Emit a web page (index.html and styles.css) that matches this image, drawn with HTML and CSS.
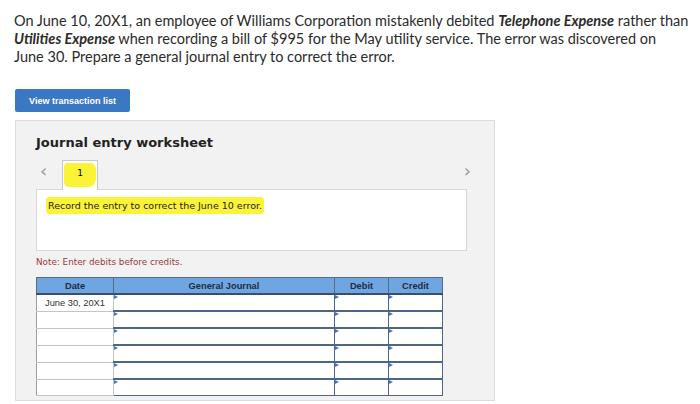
FILE: index.html
```html
<!DOCTYPE html>
<html lang="en">
<head>
    <meta charset="UTF-8">
    <title>Journal entry worksheet</title>
    <link rel="stylesheet" href="styles.css">
</head>
<body>
    <div class="page">
        <p class="question">
            On June 10, 20X1, an employee of Williams Corporation mistakenly debited <b><i>Telephone Expense</i></b> rather than<br>
            <b><i>Utilities Expense</i></b> when recording a bill of $995 for the May utility service. The error was discovered on<br>
            June 30. Prepare a general journal entry to correct the error.
        </p>

        <button class="btn-list">View transaction list</button>

        <!-- worksheet panel -->
        <div class="worksheet">
            <h2>Journal entry worksheet</h2>

            <div class="tabs">
                <span class="arrow">&lsaquo;</span>
                <span class="tab"><span class="mark">1</span></span>
                <span class="spacer"></span>
                <span class="arrow">&rsaquo;</span>
            </div>

            <div class="task">
                <span class="mark">Record the entry to correct the June 10 error.</span>
            </div>

            <div class="note">Note: Enter debits before credits.</div>

            <table class="journal">
                <thead>
                    <tr>
                        <th class="c-date">Date</th>
                        <th class="c-acct">General Journal</th>
                        <th class="c-num">Debit</th>
                        <th class="c-num">Credit</th>
                    </tr>
                </thead>
                <tbody>
                    <tr><td class="date">June 30, 20X1</td><td class="in"></td><td class="in"></td><td class="in"></td></tr>
                    <tr><td class="date"></td><td class="in"></td><td class="in"></td><td class="in"></td></tr>
                    <tr><td class="date"></td><td class="in"></td><td class="in"></td><td class="in"></td></tr>
                    <tr><td class="date"></td><td class="in"></td><td class="in"></td><td class="in"></td></tr>
                    <tr><td class="date"></td><td class="in"></td><td class="in"></td><td class="in"></td></tr>
                    <tr><td class="date"></td><td class="in"></td><td class="in"></td><td class="in"></td></tr>
                </tbody>
            </table>
        </div>
    </div>
</body>
</html>
```

FILE: styles.css
```css
body {
    margin: 0;
    background-color: white;
    font-family: "Liberation Sans", Arial, sans-serif;
    overflow: hidden;
}
.page {
    padding: 12px 0 0 14px;
}
.question {
    margin: 0;
    font-family: Lato, "Open Sans", sans-serif;
    font-size: 14.5px;
    line-height: 18px;
    color: #2b2b2b;
    white-space: nowrap;
}
.question b {
    font-weight: 700;
}
.btn-list {
    display: block;
    margin: 23px 0 0 1px;
    width: 115px;
    height: 23px;
    padding: 0;
    background-color: #3b78c3;
    color: white;
    border: none;
    border-radius: 2px;
    font-family: "Liberation Sans", Arial, sans-serif;
    font-size: 9px;
    font-weight: bold;
}
.worksheet {
    margin: 8px 0 0 1px;
    width: 438px;
    height: 279px;
    background-color: #f2f2f2;
    border: 1px solid #dcdcdc;
    padding: 0 20px;
    font-family: "DejaVu Sans", Verdana, sans-serif;
}
.worksheet h2 {
    margin: 13px 0 0 0;
    font-size: 13px;
    font-weight: bold;
    color: #222;
    line-height: 17px;
}
.tabs {
    display: flex;
    align-items: stretch;
    width: 431px;
    margin-top: 9px;
    height: 29px;
}
.arrow {
    font-size: 18px;
    color: #999;
    line-height: 22px;
}
.tabs .arrow:first-child {
    padding-left: 4px;
    width: 22px;
}
.tabs .arrow:last-child {
    margin-right: -4px;
}
.tab {
    width: 34px;
    border: 1px solid #c8c8c8;
    border-bottom: none;
    background-color: white;
    text-align: center;
    font-size: 9px;
    position: relative;
    z-index: 1;
    margin-bottom: -1px;
}
.tab .mark {
    display: block;
    margin: 2px 1px 0 1px;
    height: 24px;
    line-height: 21px;
    border-radius: 4px 6px 8px 5px;
}
.spacer {
    flex: 1;
}
.mark {
    background-color: #fbf335;
}
.task {
    width: 431px;
    height: 62px;
    background-color: white;
    border: 1px solid #d8d8d8;
    padding: 10px 0 0 9px;
    box-sizing: border-box;
    font-size: 9.5px;
    color: #222;
}
.task .mark {
    padding: 3px 2px;
    border-radius: 4px;
}
.note {
    margin-top: 6px;
    font-size: 8.8px;
    color: #9c3a3f;
}
.journal {
    margin-top: 10px;
    width: 407px;
    border-collapse: collapse;
    font-family: "Liberation Sans", Arial, sans-serif;
    font-size: 9.3px;
    background-color: white;
}
.journal th {
    background-color: #6fa6e2;
    height: 15px;
    padding: 0;
    font-weight: bold;
    color: #1e2c44;
    border: 1px solid #566c86;
    border-bottom: 2px solid #3a4f6c;
}
.c-date {
    width: 76px;
}
.c-num {
    width: 53px;
}
.journal td {
    height: 15px;
    padding: 0;
}
.journal td.date {
    border: 1px solid #c4c4c4;
    border-left: 1px solid #9aa0a8;
    text-align: center;
    color: #333;
}
.journal td.in {
    border: 1px solid #4e6584;
    border-top: 2px solid #4e6584;
    position: relative;
}
.journal td.in::before {
    content: "";
    position: absolute;
    left: 0;
    top: 0;
    border-left: 4px solid #3f77c0;
    border-top: 2px solid transparent;
    border-bottom: 2px solid transparent;
}
```
